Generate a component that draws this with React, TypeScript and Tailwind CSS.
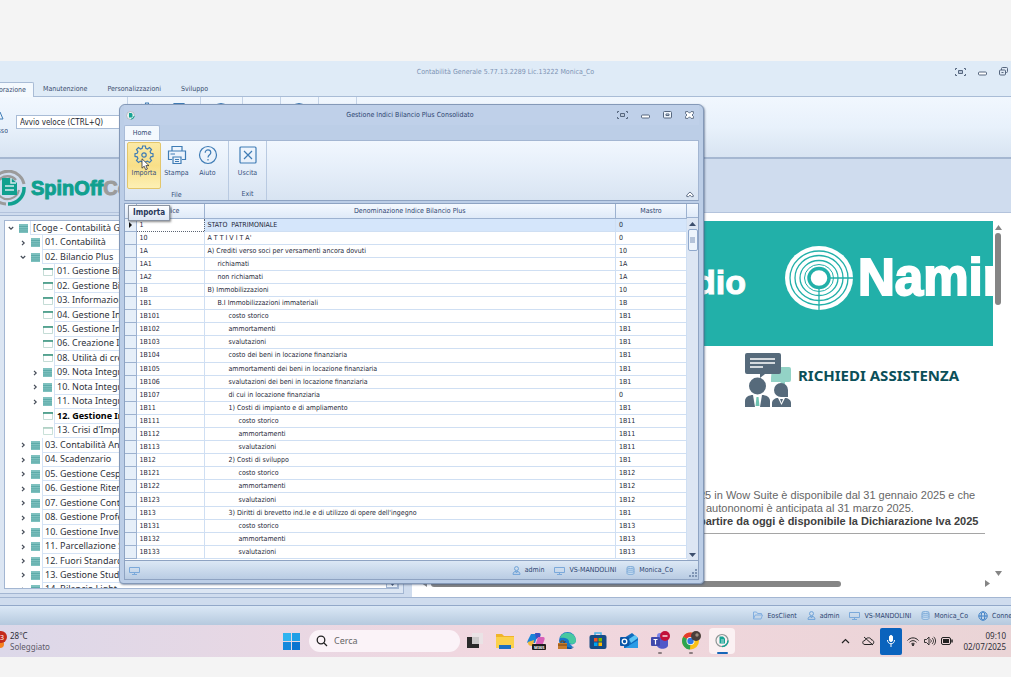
import type { ReactNode } from "react";

type IndexRow = { code: string; name: string; level: number; parent: string };

const rows: IndexRow[] = [
  { code: "1", name: "STATO  PATRIMONIALE", level: 0, parent: "0" },
  { code: "10", name: "A T T I V I T A'", level: 0, parent: "0" },
  { code: "1A", name: "A) Crediti verso soci per versamenti ancora dovuti", level: 0, parent: "10" },
  { code: "1A1", name: "richiamati", level: 1, parent: "1A" },
  { code: "1A2", name: "non richiamati", level: 1, parent: "1A" },
  { code: "1B", name: "B) Immobilizzazioni", level: 0, parent: "10" },
  { code: "1B1", name: "B.I Immobilizzazioni immateriali", level: 1, parent: "1B" },
  { code: "1B101", name: "costo storico", level: 2, parent: "1B1" },
  { code: "1B102", name: "ammortamenti", level: 2, parent: "1B1" },
  { code: "1B103", name: "svalutazioni", level: 2, parent: "1B1" },
  { code: "1B104", name: "costo dei beni in locazione finanziaria", level: 2, parent: "1B1" },
  { code: "1B105", name: "ammortamenti dei beni in locazione finanziaria", level: 2, parent: "1B1" },
  { code: "1B106", name: "svalutazioni dei beni in locazione finanziaria", level: 2, parent: "1B1" },
  { code: "1B107", name: "di cui in locazione finanziaria", level: 2, parent: "0" },
  { code: "1B11", name: "1) Costi di impianto e di ampliamento", level: 2, parent: "1B1" },
  { code: "1B111", name: "costo storico", level: 3, parent: "1B11" },
  { code: "1B112", name: "ammortamenti", level: 3, parent: "1B11" },
  { code: "1B113", name: "svalutazioni", level: 3, parent: "1B11" },
  { code: "1B12", name: "2) Costi di sviluppo", level: 2, parent: "1B1" },
  { code: "1B121", name: "costo storico", level: 3, parent: "1B12" },
  { code: "1B122", name: "ammortamenti", level: 3, parent: "1B12" },
  { code: "1B123", name: "svalutazioni", level: 3, parent: "1B12" },
  { code: "1B13", name: "3) Diritti di brevetto ind.le e di utilizzo di opere dell'ingegno", level: 2, parent: "1B1" },
  { code: "1B131", name: "costo storico", level: 3, parent: "1B13" },
  { code: "1B132", name: "ammortamenti", level: 3, parent: "1B13" },
  { code: "1B133", name: "svalutazioni", level: 3, parent: "1B13" },
];

const indent = ["pl-[3px]", "pl-[13px]", "pl-[24px]", "pl-[34px]"];

type Node = { label: string; level: number; state: "open" | "closed" | "leaf"; bold?: boolean; pale?: boolean };

const tree: Node[] = [
  { label: "[Coge - Contabilità Generale]", level: 0, state: "open" },
  { label: "01. Contabilità", level: 1, state: "closed" },
  { label: "02. Bilancio Plus", level: 1, state: "open" },
  { label: "01. Gestione Bilancio", level: 2, state: "leaf" },
  { label: "02. Gestione Bilancio", level: 2, state: "leaf" },
  { label: "03. Informazioni", level: 2, state: "leaf" },
  { label: "04. Gestione Indici", level: 2, state: "leaf" },
  { label: "05. Gestione Indici", level: 2, state: "leaf" },
  { label: "06. Creazione Istanza", level: 2, state: "leaf" },
  { label: "08. Utilità di creazione", level: 2, state: "leaf" },
  { label: "09. Nota Integrativa", level: 2, state: "closed" },
  { label: "10. Nota Integrativa", level: 2, state: "closed" },
  { label: "11. Nota Integrativa", level: 2, state: "closed" },
  { label: "12. Gestione Indici", level: 2, state: "leaf", bold: true },
  { label: "13. Crisi d'Impresa", level: 2, state: "leaf", pale: true },
  { label: "03. Contabilità Analitica", level: 1, state: "closed" },
  { label: "04. Scadenzario", level: 1, state: "closed" },
  { label: "05. Gestione Cespiti", level: 1, state: "closed" },
  { label: "06. Gestione Ritenute", level: 1, state: "closed" },
  { label: "07. Gestione Conto", level: 1, state: "closed" },
  { label: "08. Gestione Professionisti", level: 1, state: "closed" },
  { label: "10. Gestione Inventari", level: 1, state: "closed" },
  { label: "11. Parcellazione Studi", level: 1, state: "closed" },
  { label: "12. Fuori Standard", level: 1, state: "closed" },
  { label: "13. Gestione Studio", level: 1, state: "closed" },
  { label: "14. Bilancio Light", level: 1, state: "closed" },
];

const treeIndent = ["pl-px", "pl-[13px]", "pl-[25px]"];

/* small icons */

const UserIcon = () => (
  <svg width="9" height="9" viewBox="0 0 9 9" fill="none" stroke="#6fa3d8" className="shrink-0">
    <circle cx="4.5" cy="2.6" r="2" />
    <path d="M1 8.4c0-2 1.2-3 3.5-3s3.5 1 3.5 3zM3.5 5.5l1 1.500 1-1.500" />
  </svg>
);

const ScreenIcon = () => (
  <svg width="11" height="9" viewBox="0 0 11 9" fill="none" stroke="#7ba9da" className="shrink-0">
    <path d="M.5 1.500h10v5h-10zM3 8.500h5M5.500 6.500v2" />
  </svg>
);

const DbIcon = () => (
  <svg width="9" height="9" viewBox="0 0 9 9" fill="#c9def2" stroke="#6d9fd2" strokeWidth=".8" className="shrink-0">
    <path d="M1 1.500v6c0 1.300 7 1.300 7 0v-6" />
    <ellipse cx="4.500" cy="1.500" rx="3.500" ry="1" />
    <path d="M1 3.500c0 1 7 1 7 0M1 5.500c0 1 7 1 7 0" fill="none" />
  </svg>
);

const FolderIcon = () => (
  <svg width="10" height="9" viewBox="0 0 10 9" fill="none" stroke="#83afe0" className="shrink-0">
    <path d="M.5 8V1h3l1 1.500h4V4M.5 8l1.700-4h7.300L8 8z" />
  </svg>
);

const GlobeIcon = () => (
  <svg width="10" height="10" viewBox="0 0 10 10" fill="none" stroke="#3f80c6" className="shrink-0">
    <circle cx="5" cy="5" r="4.200" />
    <ellipse cx="5" cy="5" rx="1.900" ry="4.200" />
    <path d="M.8 5h8.400" />
  </svg>
);

const FullscreenIcon = () => (
  <svg width="11" height="8" viewBox="0 0 11 8" fill="none" stroke="#56677f">
    <path d="M.5 2V.5H2M9 .5h1.500V2M.5 6v1.500H2M9 7.500h1.500V6" />
    <path d="M3.500 2.500h4v3h-4z" fill="#b9c6d8" />
  </svg>
);

const MinIcon = () => (
  <svg width="9" height="8" viewBox="0 0 9 8" fill="#fff" stroke="#56677f">
    <rect x=".5" y="4" width="8" height="3" rx="1" />
  </svg>
);

const MaxIcon = () => (
  <svg width="9" height="8" viewBox="0 0 9 8" fill="#eef4fb" stroke="#56677f">
    <rect x=".5" y=".5" width="8" height="6.500" rx="1" />
    <path d="M3 3h3v1.500H3z" />
  </svg>
);

const CloseIcon = () => (
  <svg width="9" height="8" viewBox="0 0 9 8" fill="#fff" stroke="#56677f" strokeWidth=".9">
    <path d="M.6.600h2.400l1.500 1.600L6 .600h2.400v2L7 4l1.400 1.400v2H6L4.500 5.800 3 7.400H.600v-2L2 4 .600 2.600z" />
  </svg>
);

const RestoreIcon = () => (
  <svg width="9" height="9" viewBox="0 0 9 9" fill="#dfe9f5" stroke="#56677f">
    <rect x="2.500" y=".5" width="6" height="5" rx="1" />
    <rect x=".5" y="3" width="6" height="5" rx="1" />
    <path d="M2.500 5.500h2" />
  </svg>
);

const BrandMark = () => (
  <svg width="36" height="36" viewBox="0 0 36 36" fill="none" className="shrink-0">
    <path d="M4 10A16 16 0 0 1 34 14" stroke="#9b9b9b" strokeWidth="3" />
    <path d="M9 26A11.500 11.500 0 0 1 26 10" stroke="#9b9b9b" strokeWidth="2.500" />
    <path d="M4 28a16 16 0 0 0 12 6" stroke="#9b9b9b" strokeWidth="3" />
    <path d="M34 17A16 16 0 0 1 18 34" stroke="#10a08f" strokeWidth="3.500" />
    <path d="M9 25a11.500 11.500 0 0 0 20-5" stroke="#9b9b9b" strokeWidth="2" />
    <path d="M12 8h9l6 5v12H12z" fill="#10a08f" />
    <path d="M15 16h9M15 20h9M21 8v5h5" stroke="#d5e9ee" strokeWidth="1.500" />
  </svg>
);

const GearIcon = () => (
  <svg width="20" height="20" viewBox="0 0 20 20" fill="none" stroke="#3f7cb5" strokeWidth="1.200">
    <path d="M8.200 3.300 8.600 1h2.800l.4 2.300 1.700.7 2-1.400 2 2-1.400 2 .7 1.700 2.200.4v2.700l-2.200.4-.7 1.700 1.400 2-2 2-2-1.400-1.700.7-.4 2.200H8.600l-.4-2.200-1.700-.7-2 1.400-2-2 1.400-2-.7-1.700L1 11.400V8.700l2.200-.4.7-1.700-1.400-2 2-2 2 1.400z" />
    <circle cx="10" cy="10" r="2.200" />
  </svg>
);

const PrinterIcon = () => (
  <svg width="20" height="20" viewBox="0 0 20 20" fill="none" stroke="#3f7cb5" strokeWidth="1.200">
    <path d="M5 6V1.500h10V6M5 14.500H1.500v-8.500h17v8.500H15" />
    <path d="M6 12h8v6.500H6zM8 14.500h4M8 16.500h4M3.500 9H8" />
  </svg>
);

const HelpIcon = () => (
  <svg width="20" height="20" viewBox="0 0 20 20" fill="none" stroke="#3f7cb5" strokeWidth="1.200">
    <circle cx="10" cy="10" r="8.500" />
    <path d="M7.200 7.700c0-3.800 5.600-3.600 5.600 0 0 2-2.800 2.300-2.800 4.800M10 14v1.500" />
  </svg>
);

const ExitIcon = () => (
  <svg width="20" height="20" viewBox="0 0 20 20" fill="none" stroke="#3f7cb5" strokeWidth="1.200">
    <rect x="2" y="2" width="16" height="16" rx="1" />
    <path d="m6 6 8 8M14 6l-8 8" />
  </svg>
);

const RibbonButton = ({ label, icon, active }: { label: string; icon: ReactNode; active?: boolean }) => (
  <button
    type="button"
    className={`flex h-[47px] flex-col items-center gap-px rounded-xs border pt-[2px] ${
      active ? "w-[34px] border-[#e3c66b] bg-linear-to-b from-[#fbe9a6] via-[#f8df88] to-[#fdf0b4]" : "w-[31px] border-transparent"
    }`}
  >
    {icon}
    <span className="leading-[14px]">{label}</span>
  </button>
);

const StatusItem = ({ icon, children }: { icon: ReactNode; children: ReactNode }) => (
  <span className="flex shrink-0 items-center gap-1">
    {icon}
    <span>{children}</span>
  </span>
);

const TreeRow = ({ node }: { node: Node }) => (
  <li className={`flex min-h-0 flex-1 items-stretch ${treeIndent[node.level]}`}>
    <span className="mr-1 flex w-[9px] items-center justify-center">
      {node.state !== "leaf" && (
        <svg width="6" height="6" viewBox="0 0 6 6" fill="none" stroke="#444b57" strokeWidth="1.200">
          <path d={node.state === "open" ? "M.8 2 3 4.200 5.200 2" : "M2 .8 4.200 3 2 5.200"} />
        </svg>
      )}
    </span>
    <span className="mr-px flex w-[10px] items-center">
      {node.state === "leaf" ? (
        <svg width="10" height="8" viewBox="0 0 10 8" fill="#fff">
          <path d="M.5.5h9v7h-9z" stroke={node.pale ? "#bcd9cf" : "#b6d3cb"} strokeWidth=".8" />
          <path d="M0 1h10" stroke={node.pale ? "#a9cdbf" : "#2f8f79"} strokeWidth="1.500" />
        </svg>
      ) : (
        <svg width="9" height="9" viewBox="0 0 9 9">
          <path d="M0 0h9v9H0z" fill="#7fc1bf" />
          <path d="M0 2.500h9M0 4.800h9M0 7h9" stroke="#4fa29f" strokeWidth=".7" />
        </svg>
      )}
    </span>
    <span
      className={`flex flex-1 items-center overflow-hidden border-b border-l border-[#d5e3f5] pl-[2px] text-[9px] whitespace-nowrap ${
        node.bold ? "font-bold text-black" : "text-[#2e323a]"
      }`}
    >
      {node.label}
    </span>
  </li>
);

const Assistants = () => (
  <svg width="48" height="56" viewBox="0 0 48 56">
    <path d="M28 15h17a2 2 0 0 1 2 2v11a2 2 0 0 1-2 2h-4v4l-5-4h-9v-4z" fill="#93d3c6" />
    <path d="M3 1h32a2 2 0 0 1 2 2v17a2 2 0 0 1-2 2H21l-5 4v-4H3a2 2 0 0 1-2-2V3a2 2 0 0 1 2-2z" fill="#566a7b" />
    <path d="M6 7h25M6 11h25M6 15h13" stroke="#fff" strokeWidth="1.500" />
    <circle cx="13.500" cy="34" r="8.500" fill="#566a7b" />
    <path d="M1 55v-6c0-4 4-6 8-6h9c4 0 8 2 8 6v6z" fill="#566a7b" />
    <path d="M9 43h9l-2 12h-5z" fill="#fff" />
    <path d="M12.500 45h2l1 9h-4z" fill="#6fc3b1" />
    <path d="M44 45h-7a7 7 0 1 1 7-7z" fill="#566a7b" />
    <path d="M28 55v-4c0-3 3-5 6-5h7c3 0 6 2 6 5v4z" fill="#566a7b" />
    <path d="m34 46 3.500 7 3.500-7" fill="#fff" />
    <path d="m36 47 1.500 4 1.500-4z" fill="#566a7b" />
  </svg>
);

const NamirialMark = () => (
  <svg width="70" height="66" viewBox="0 0 70 66" fill="none">
    <ellipse cx="35" cy="33" rx="34" ry="32" fill="#fff" />
    <g stroke="#22b0a9" strokeWidth="1.300">
      <ellipse cx="35" cy="33" rx="29" ry="27" />
      <ellipse cx="35" cy="33" rx="24" ry="22.500" />
      <ellipse cx="35" cy="33" rx="19" ry="17.500" />
      <path d="M35 43v23M46 33h24" />
    </g>
    <ellipse cx="35" cy="33" rx="14.500" ry="13.500" stroke="#22b0a9" strokeWidth="1" />
    <ellipse cx="35" cy="33" rx="10" ry="9.500" stroke="#22b0a9" strokeWidth="3.500" />
  </svg>
);

const TaskIcon = ({ children, dot, active }: { children: ReactNode; dot?: boolean; active?: boolean }) => (
  <button
    type="button"
    className={`relative flex h-[26px] w-[26px] items-center justify-center rounded ${active ? "bg-[#fbf1f3]" : ""}`}
  >
    <svg width="20" height="20" viewBox="0 0 20 20">
      {children}
    </svg>
    {dot && <span className="absolute bottom-0 h-[2px] w-1 rounded-full bg-[#8b7d80]" />}
    {active && <span className="absolute bottom-0 h-[2px] w-[11px] rounded-full bg-[#1766b8]" />}
  </button>
);

function ConsolidatedDialog() {
  return (
    <div
      role="dialog"
      aria-label="Gestione Indici Bilancio Plus Consolidato"
      className="absolute top-[43px] left-[119px] flex h-[480px] w-[585px] flex-col rounded-t-md rounded-b border border-[#8499b8] bg-[#bccee7] px-1 pb-[3px] shadow-[1px_1px_2px_rgba(70,90,120,0.6)]"
    >
      <div className="grid h-[20px] shrink-0 grid-cols-[1fr_auto_1fr] items-center bg-[#bfd0e9] pr-[5px] pl-[2px] text-[#2d4470]">
        <span>
          <svg width="9" height="9" viewBox="0 0 9 9" fill="none">
            <circle cx="4.500" cy="4.500" r="4" fill="#e8f0f2" stroke="#a8aeb5" strokeWidth=".7" />
            <path d="M3 2h2.500l1 1v3.500H3z" fill="#16a394" />
            <path d="M8.300 5a4 4 0 0 1-3.500 3.300" stroke="#16a394" />
          </svg>
        </span>
        <span>Gestione Indici Bilancio Plus Consolidato</span>
        <span className="flex items-center justify-end gap-[13px]">
          <button type="button" aria-label="Schermo intero"><FullscreenIcon /></button>
          <button type="button" aria-label="Riduci"><MinIcon /></button>
          <button type="button" aria-label="Ingrandisci"><MaxIcon /></button>
          <button type="button" aria-label="Chiudi"><CloseIcon /></button>
        </span>
      </div>

      <div className="flex h-[15px] shrink-0 items-end">
        <button type="button" className="h-[15px] w-[36px] rounded-t-xs border border-b-0 border-[#a9bcd8] bg-[#f4f9fe] text-[#2d4470]">
          Home
        </button>
      </div>

      {/* Ribbon */}
      <div className="relative flex h-[61px] shrink-0 border border-[#a3b6d2] border-b-[#8ea3c2] bg-linear-to-b from-[#f1f7fe] via-[#e5eef9] to-[#d8e4f2] text-[#34507c]">
        <div className="flex flex-col border-r border-[#b9cae1]">
          <div className="flex w-[103px] pt-px pl-[2px]">
            <RibbonButton label="Importa" active icon={<GearIcon />} />
            <RibbonButton label="Stampa" icon={<PrinterIcon />} />
            <RibbonButton label="Aiuto" icon={<HelpIcon />} />
          </div>
          <span className="text-center leading-[12px]">File</span>
        </div>
        <div className="flex w-[38px] flex-col items-center border-r border-[#b9cae1] pt-px">
          <RibbonButton label="Uscita" icon={<ExitIcon />} />
          <span className="leading-[12px]">Exit</span>
        </div>
        <button type="button" aria-label="Comprimi" className="mt-auto mr-1 mb-[2px] ml-auto">
          <svg width="8" height="7" viewBox="0 0 8 7" fill="#fff" stroke="#56677f" strokeWidth=".9">
            <path d="M4 1 7.200 4v1.600H5.500L4 4.200 2.500 5.600H.800V4z" />
          </svg>
        </button>
        {/* Pointer and tooltip */}
        <svg width="9" height="13" viewBox="0 0 9 13" className="absolute top-[17px] left-[16px]">
          <path d="M1 .8v9.400l2.200-2 1.500 3.500 1.700-.7-1.500-3.400H8z" fill="#fff" stroke="#333" strokeWidth=".8" />
        </svg>
        <span role="tooltip" className="absolute top-[64px] left-[3px] z-10 border border-[#8a93a1] bg-linear-to-b from-white to-[#dbe5f4] px-1 text-[8px] leading-[14px] font-bold text-[#26375a] shadow-[1px_1px_2px_rgba(60,60,60,0.6)]">
          Importa
        </span>
      </div>

      {/* Grid */}
      <div className="mt-[2px] flex min-h-0 flex-1 overflow-hidden border border-[#8ea3c2] bg-white">
        <table className="h-[355px] flex-1 table-fixed border-collapse text-[#1e2738]">
          <colgroup>
            <col className="w-[11px]" />
            <col className="w-[68px]" />
            <col />
            <col className="w-[71px]" />
          </colgroup>
          <thead>
            <tr className="h-[14px] bg-linear-to-b from-[#f4f9ff] to-[#dfeaf8] text-[#2d4470]">
              <th className="border-r border-b border-[#9db2d0] p-0" />
              <th className="border-r border-b border-[#9db2d0] p-0 font-normal">Indice</th>
              <th className="border-r border-b border-[#9db2d0] p-0 font-normal">Denominazione Indice Bilancio Plus</th>
              <th className="border-r border-b border-[#9db2d0] p-0 font-normal">Mastro</th>
            </tr>
          </thead>
          <tbody>
            {rows.map((row, i) => (
              <tr key={row.code} className={i === 0 ? "bg-[#d5e6fb]" : "bg-white"}>
                <td className="border-r border-b border-[#9db2d0] bg-[#e6eff9] p-0">
                  {i === 0 && (
                    <svg width="10" height="6" viewBox="0 0 10 6" className="block">
                      <path d="m4 0 3 3-3 3z" fill="#111" />
                    </svg>
                  )}
                </td>
                <td className={`p-0 pl-[3px] leading-[12px] ${i === 0 ? "border border-dotted border-[#5b6473] bg-white" : "border-r border-b border-[#cfdff3]"}`}>
                  {row.code}
                </td>
                <td className={`border-r border-b border-[#cfdff3] p-0 leading-[12px] whitespace-pre ${indent[row.level]}`}>{row.name}</td>
                <td className="border-r border-b border-[#cfdff3] p-0 pl-[3px] leading-[12px]">{row.parent}</td>
              </tr>
            ))}
          </tbody>
        </table>
        <div className="flex w-[11px] shrink-0 flex-col items-center bg-[#dde6f3] pb-[3px]">
          <span className="h-[14px] w-full border-b border-[#9db2d0] bg-linear-to-b from-[#f4f9ff] to-[#dfeaf8]" />
          <svg width="7" height="4" viewBox="0 0 7 4" className="mt-1"><path d="M0 4h7L3.500 0z" fill="#3d4f6d" /></svg>
          <span className="mt-[3px] flex h-[22px] w-[10px] items-center justify-center rounded-xs border border-[#8fa8cc] bg-[#edf4fc]">
            <span className="h-[6px] w-[5px] bg-[#b4c3d9]" />
          </span>
          <svg width="7" height="4" viewBox="0 0 7 4" className="mt-auto"><path d="M0 0h7L3.500 4z" fill="#3d4f6d" /></svg>
        </div>
      </div>

      <div className="flex h-[19px] shrink-0 items-center border border-t-0 border-[#8ea3c2] bg-linear-to-b from-[#dce8f5] to-[#b9cce3] pl-1 text-[#2d4470]">
        <ScreenIcon />
        <span className="ml-auto flex items-center gap-[10px]">
          <StatusItem icon={<UserIcon />}>admin</StatusItem>
          <StatusItem icon={<ScreenIcon />}>VS-MANDOLINI</StatusItem>
          <StatusItem icon={<DbIcon />}>Monica_Co</StatusItem>
        </span>
        <svg width="9" height="9" viewBox="0 0 9 9" className="mt-[6px] ml-4" fill="#8095b4">
          <path d="M6 0h2v2H6zM3 3h2v2H3zM6 3h2v2H6zM0 6h2v2H0zM3 6h2v2H3zM6 6h2v2H6z" />
        </svg>
      </div>
    </div>
  );
}

export default function App() {
  return (
    <div className="min-h-screen overflow-hidden bg-[#f4f4f4] pt-[61px] font-['DejaVu_Sans_Condensed','Noto_Sans',sans-serif] text-[7px] leading-[10px]">
      <main className="relative bg-[#cfdcee]">
        {/* Title bar */}
        <header className="grid h-[21px] grid-cols-[1fr_auto_1fr] items-center bg-[#dfebf7] text-[#7c92b3]">
          <span />
          <span>Contabilità Generale 5.77.13.2289 Lic.13222 Monica_Co</span>
          <span className="flex items-center justify-end gap-3 pr-[3px]">
            <button type="button" aria-label="Schermo intero"><FullscreenIcon /></button>
            <button type="button" aria-label="Riduci"><MinIcon /></button>
            <button type="button" aria-label="Ripristina"><RestoreIcon /></button>
          </span>
        </header>

        <nav className="flex h-[15px] items-stretch gap-[20px] border-b border-[#a9bcd6] bg-[#dfebf7] text-[#3a4d6e]">
          <button type="button" className="-mr-[11px] -mb-px flex w-[34px] items-center justify-end overflow-hidden rounded-tr-xs border-t border-r border-[#a9bcd6] bg-[#f4f9fe] pr-[7px]">
            Elaborazione
          </button>
          <button type="button">Manutenzione</button>
          <button type="button">Personalizzazioni</button>
          <button type="button">Sviluppo</button>
        </nav>

        {/* Main ribbon */}
        <div className="flex h-[62px] border-b-2 border-[#a5b7d1] bg-linear-to-b from-[#f1f7fe] via-[#e8f1fb] to-[#d8e4f2] text-[#34507c]">
          <div className="flex w-[128px] gap-2 border-r border-[#c4d3e7]">
            <button type="button" className="flex w-2 flex-col items-end justify-start gap-[5px] overflow-hidden pt-[14px]">
              <svg width="8" height="10" viewBox="0 0 8 10" fill="none" stroke="#3f7cb5"><path d="M-5 8 0 1l3 7H-5" /></svg>
              <span>Accesso</span>
            </button>
            <input
              aria-label="Avvio veloce"
              defaultValue="Avvio veloce (CTRL+Q)"
              className="mt-[18px] h-[14px] min-w-0 flex-1 border border-[#a9bcd6] bg-white px-[3px] text-[8px] text-[#23272f]"
            />
          </div>
          <div className="flex w-[73px] gap-3 border-r border-[#c4d3e7] pt-[5px] pl-[9px]">
            <GearIcon />
            <PrinterIcon />
          </div>
          <div className="w-[42px] border-r border-[#c4d3e7] pt-[5px] pl-[10px]"><HelpIcon /></div>
          <div className="w-[38px] border-r border-[#c4d3e7]" />
          <div className="w-[38px] border-r border-[#c4d3e7] pt-[5px] pl-2"><HelpIcon /></div>
          <div className="w-[38px] border-r border-[#c4d3e7]" />
        </div>

        {/* Brand strip */}
        <div className="flex h-[54px] items-center gap-[5px] border-b border-[#b3c3dc] pt-1">
          <span className="-ml-[10px]"><BrandMark /></span>
          <span className="font-['Liberation_Sans',sans-serif] text-[20px] font-bold text-[#10a08f] [-webkit-text-stroke:1px_currentColor]">
            SpinOff<span className="text-[#9b9b9b]">Coge</span>
          </span>
        </div>

        <div className="flex h-[384px] gap-2">
          <aside className="mt-[2px] mb-[3px] w-[404px] shrink-0 border border-l-0 border-[#a3b6d2] bg-[#dce6f3] p-1">
            <div className="relative h-full overflow-hidden border border-[#a3b6d2] bg-white font-['Noto_Sans',sans-serif]">
              <ul className="flex h-[376px] flex-col">
                {tree.map((node) => (
                  <TreeRow key={node.level + node.label} node={node} />
                ))}
              </ul>
              <span className="absolute right-0 bottom-0 flex h-[8px] w-[12px] items-center justify-center border border-[#a3b6d2] bg-[#edf4fc]">
                <svg width="5" height="3" viewBox="0 0 5 3"><path d="M0 0h5L2.500 3z" fill="#3d4f6d" /></svg>
              </span>
            </div>
          </aside>

          <section className="flex min-w-0 flex-1 flex-col bg-white pt-2 pr-2">
            <div className="flex min-h-0 flex-1">
              <div className="min-w-0 flex-1 overflow-hidden">
                <div className="flex h-[125px] items-center overflow-hidden bg-[#22b0a9] pl-[283px] font-['Liberation_Sans',sans-serif] font-bold whitespace-nowrap text-white">
                  <span className="w-[52px] pb-1 text-[34px] leading-[34px] [-webkit-text-stroke:1px_currentColor]">dio</span>
                  <span className="mr-1 ml-[38px] shrink-0 pb-3"><NamirialMark /></span>
                  <span className="pb-[12px] text-[51px] leading-[50px] [-webkit-text-stroke:2px_currentColor]">Namirial</span>
                </div>
                <a href="#assistenza" className="mt-[6px] ml-[332px] flex items-center gap-[6px] font-['Noto_Sans',sans-serif] text-[15px] font-bold whitespace-nowrap text-[#0b4f59]">
                  <Assistants />
                  <span className="pb-[10px]">RICHIEDI ASSISTENZA</span>
                </a>
                <div className="mt-[81px] mr-2 border-b border-[#a5a5a5] pb-[5px] pl-[287px] font-['Liberation_Sans',sans-serif] text-[11px] leading-[13px] whitespace-nowrap text-[#666]">
                  <p>25 in Wow Suite è disponibile dal 31 gennaio 2025 e che</p>
                  <p className="pl-[7px]">autononomi è anticipata al 31 marzo 2025.</p>
                  <p className="font-bold text-[#404040]">partire da oggi è disponibile la Dichiarazione Iva 2025</p>
                </div>
              </div>
              <div className="flex w-[10px] flex-col items-center py-1">
                <svg width="7" height="5" viewBox="0 0 7 5"><path d="M0 5h7L3.500 0z" fill="#858585" /></svg>
                <span className="mt-[3px] h-[72px] w-[6px] rounded-full bg-[#858585]" />
                <svg width="7" height="5" viewBox="0 0 7 5" className="mt-auto"><path d="M0 0h7L3.500 5z" fill="#858585" /></svg>
              </div>
            </div>
            <div className="mb-[10px] flex items-center pr-[13px] pl-[10px]">
              <svg width="5" height="7" viewBox="0 0 5 7"><path d="M5 0v7L0 3.500z" fill="#858585" /></svg>
              <span className="ml-1 h-[6px] w-[410px] rounded-full bg-[#858585]" />
              <svg width="5" height="7" viewBox="0 0 5 7" className="ml-auto"><path d="M0 0v7l5-3.500z" fill="#858585" /></svg>
            </div>
          </section>
        </div>

        <div className="h-2 border-t border-[#a3b6d2]" />
        <footer className="flex h-[20px] items-center justify-end gap-[10px] border-t border-[#92a8c9] bg-linear-to-b from-[#dbe8f6] to-[#b5c9de] whitespace-nowrap text-[#2d4470]">
          <StatusItem icon={<FolderIcon />}>EosClient</StatusItem>
          <StatusItem icon={<UserIcon />}>admin</StatusItem>
          <StatusItem icon={<ScreenIcon />}>VS-MANDOLINI</StatusItem>
          <StatusItem icon={<DbIcon />}>Monica_Co</StatusItem>
          <span className="w-[33px] overflow-hidden">
            <StatusItem icon={<GlobeIcon />}>Connesso</StatusItem>
          </span>
        </footer>

        <ConsolidatedDialog />
      </main>

      {/* Taskbar */}
      <div className="flex h-[32px] items-center bg-linear-to-r from-[#dcd8e9] via-[#f2d7df] via-50% to-[#ead4d6] font-['Noto_Sans',sans-serif] text-[8px] text-[#2f2f38]">
        <div className="flex w-[283px] shrink-0 items-center gap-[3px]">
          <svg width="7" height="20" viewBox="0 0 7 20">
            <circle cx="0" cy="13" r="4" fill="#f58220" />
            <circle cx="1" cy="6" r="6" fill="#c42b1c" />
            <text x="0" y="9" fontSize="7" fill="#fff">3</text>
          </svg>
          <div className="leading-[11px]">
            <p>28°C</p>
            <p className="text-[#5d5a68]">Soleggiato</p>
          </div>
        </div>
        <button type="button" aria-label="Start" className="mr-[9px] shrink-0">
          <svg width="17" height="17" viewBox="0 0 17 17">
            <path d="M0 0h8v8H0z" fill="#2fb4f0" />
            <path d="M9 0h8v8H9z" fill="#1f9fe6" />
            <path d="M0 9h8v8H0z" fill="#1489dc" />
            <path d="M9 9h8v8H9z" fill="#0a74d0" />
          </svg>
        </button>
        <label className="flex h-[22px] w-[151px] shrink-0 items-center gap-[6px] rounded-full bg-[#fbf3f8] px-[7px]">
          <svg width="12" height="12" viewBox="0 0 12 12" fill="none" stroke="#222" strokeWidth="1.300" className="shrink-0">
            <circle cx="5" cy="5" r="3.800" />
            <path d="m8 8 3 3" />
          </svg>
          <input placeholder="Cerca" aria-label="Cerca" className="w-full min-w-0 bg-transparent text-[9px] outline-none placeholder:text-[#666]" />
        </label>

        <div className="flex shrink-0 gap-[5px] pl-px">
          <TaskIcon>
            <path d="M3 6h12v11H3z" fill="#2a2a2a" />
            <path d="M8 2h11v11H8z" fill="#e9e5e6" fillOpacity=".85" />
          </TaskIcon>
          <TaskIcon>
            <path d="M1 3h6l2 2h10v12H1z" fill="#f0b429" />
            <path d="M1 6h18v11H1z" fill="#fbd14b" />
            <path d="M4 14h12v4H4z" fill="#1c6fc1" />
          </TaskIcon>
          <TaskIcon>
            <path d="M5 3h7l-3 9H2c-1 0-1-1 0-3z" fill="#1a84d8" />
            <path d="M9 2h4c2 0 2 2 1 4l-4 2z" fill="#3b52c4" />
            <path d="M12 6h5c2 0 2 2 1 4l-3 8H8z" fill="#d860b8" />
            <path d="m2 11 6-2-1 6c-4 0-5-1-5-4z" fill="#f0b83a" />
            <rect x="6" y="13" width="14" height="6" rx="1" fill="#1d1d1d" />
            <text x="8" y="18" fontSize="4" fontWeight="bold" fill="#fff">M365</text>
          </TaskIcon>
          <TaskIcon>
            <circle cx="10.500" cy="9.500" r="8.500" fill="#1778c8" />
            <path d="M3 7c2-8 16-7 16 3 0 3-4 4-7 2 1-4-4-6-9-5z" fill="#48c9a0" />
            <path d="M8 12c0 3 4 6 9 4-2 3-9 3-11-2 0-3 1-4 3-4z" fill="#0c4c92" />
            <path d="M13 13c2 1 5 0 6-2l1 3-4 2z" fill="#f4dce2" />
            <path d="M1 12h9v6H1z" fill="#c77b2b" />
            <path d="M1 14h9M4 12v-2h3v2" stroke="#7b4511" fill="none" />
          </TaskIcon>
          <TaskIcon>
            <path d="M7 4V2h6v2" fill="none" stroke="#48b3e8" strokeWidth="1.500" />
            <rect x="1.500" y="4" width="17" height="14" rx="2" fill="#164a84" />
            <path d="M6 7h3.500v3.500H6z" fill="#f25022" />
            <path d="M10.500 7H14v3.500h-3.500z" fill="#7fba00" />
            <path d="M6 11.500h3.500V15H6z" fill="#00a4ef" />
            <path d="M10.500 11.500H14V15h-3.500z" fill="#ffb900" />
          </TaskIcon>
          <TaskIcon>
            <path d="m5 7 8-5 6 5v10H5z" fill="#0f6cbd" />
            <path d="m10 8 6-4 3 3-7 5z" fill="#5cc4f5" />
            <path d="m6 17 13-8v8z" fill="#2b9be6" />
            <rect x="1" y="6" width="9" height="9" rx="1" fill="#0b57a8" />
            <circle cx="5.500" cy="10.500" r="2.300" fill="none" stroke="#fff" strokeWidth="1.300" />
          </TaskIcon>
          <TaskIcon dot>
            <circle cx="10" cy="5" r="3" fill="#7b83eb" />
            <path d="M7 7h11v7c0 5-11 5-11 0z" fill="#5059c9" />
            <rect x="1" y="6" width="9" height="9" rx="1" fill="#4048ab" />
            <path d="M3.500 8.500h4M5.500 8.500v5" stroke="#fff" strokeWidth="1.200" />
            <circle cx="15" cy="5" r="5" fill="#c2123a" />
            <path d="M12.500 5h5" stroke="#fff" strokeWidth="1.300" />
          </TaskIcon>
          <TaskIcon dot>
            <circle cx="9.500" cy="10" r="8.500" fill="#fbc116" />
            <path d="M9.500 10 2.200 5.700A8.500 8.500 0 0 1 17 6z" fill="#e33b2e" />
            <path d="M9.500 10 2.200 5.700A8.500 8.500 0 0 0 9 18.500z" fill="#2da44f" />
            <circle cx="9.500" cy="10" r="4" fill="#fff" />
            <circle cx="9.500" cy="10" r="3.200" fill="#2f79e0" />
            <circle cx="15" cy="5" r="5" fill="#4a3f3a" />
            <circle cx="16" cy="4" r="1.700" fill="#9b8a7c" />
          </TaskIcon>
          <TaskIcon active>
            <circle cx="10" cy="9.500" r="6" fill="none" stroke="#8f9696" strokeWidth="1.200" />
            <path d="M16 9.500a6 6 0 0 1-6 6" fill="none" stroke="#16a394" strokeWidth="1.500" />
            <path d="M7.500 5.500h3.500l2 2v5H7.500z" fill="#16a394" />
            <path d="M9 9h3M9 11h3" stroke="#fff" strokeWidth=".7" />
          </TaskIcon>
        </div>

        <div className="ml-auto flex shrink-0 items-center pr-[5px]">
          <svg width="9" height="6" viewBox="0 0 9 6" className="mr-3" fill="none" stroke="#222" strokeWidth="1.200"><path d="m1 5 3.500-3.500L8 5" /></svg>
          <svg width="13" height="10" viewBox="0 0 13 10" className="mr-[5px]" fill="none" stroke="#222"><path d="M3 8.500c-3 0-3-4 0-4C4 1 9 1 9.500 4c3 0 3 4.500 0 4.500zM2 1l9 8" /></svg>
          <button type="button" aria-label="Microfono" className="mr-[5px] flex h-[27px] w-[22px] items-center justify-center rounded-xs bg-[#0a63bd]">
            <svg width="8" height="12" viewBox="0 0 8 12" fill="none" stroke="#fff"><rect x="2.500" y=".5" width="3" height="6" rx="1.500" fill="#fff" /><path d="M.5 5c0 5 7 5 7 0M4 9v3" /></svg>
          </button>
          <svg width="12" height="9" viewBox="0 0 12 9" className="mr-[5px]" fill="none" stroke="#222"><path d="M.5 3.500c3-3.500 8-3.500 11 0M2.500 5.300c2-2.200 5-2.200 7 0M4.300 7c1-1 2.400-1 3.400 0" /><circle cx="6" cy="8" r=".7" fill="#222" /></svg>
          <svg width="12" height="10" viewBox="0 0 12 10" className="mr-[5px]" fill="none" stroke="#222" strokeWidth=".9"><path d="M.5 3.500v3h2L5 9V1L2.500 3.500zM6.500 3.500c1 1 1 2 0 3M8 2c2 2 2 4 0 6M9.700.8c2.500 2.500 2.500 6 0 8.400" /></svg>
          <svg width="12" height="8" viewBox="0 0 12 8" className="mr-[10px]"><rect x=".5" y=".5" width="9" height="7" rx="1.500" fill="none" stroke="#222" /><path d="M2 2h6v4H2z" fill="#222" /><path d="M11 2.500v3" stroke="#222" strokeWidth="1.500" /></svg>
          <div className="text-right leading-[11px]">
            <p>09:10</p>
            <p>02/07/2025</p>
          </div>
        </div>
      </div>
    </div>
  );
}
